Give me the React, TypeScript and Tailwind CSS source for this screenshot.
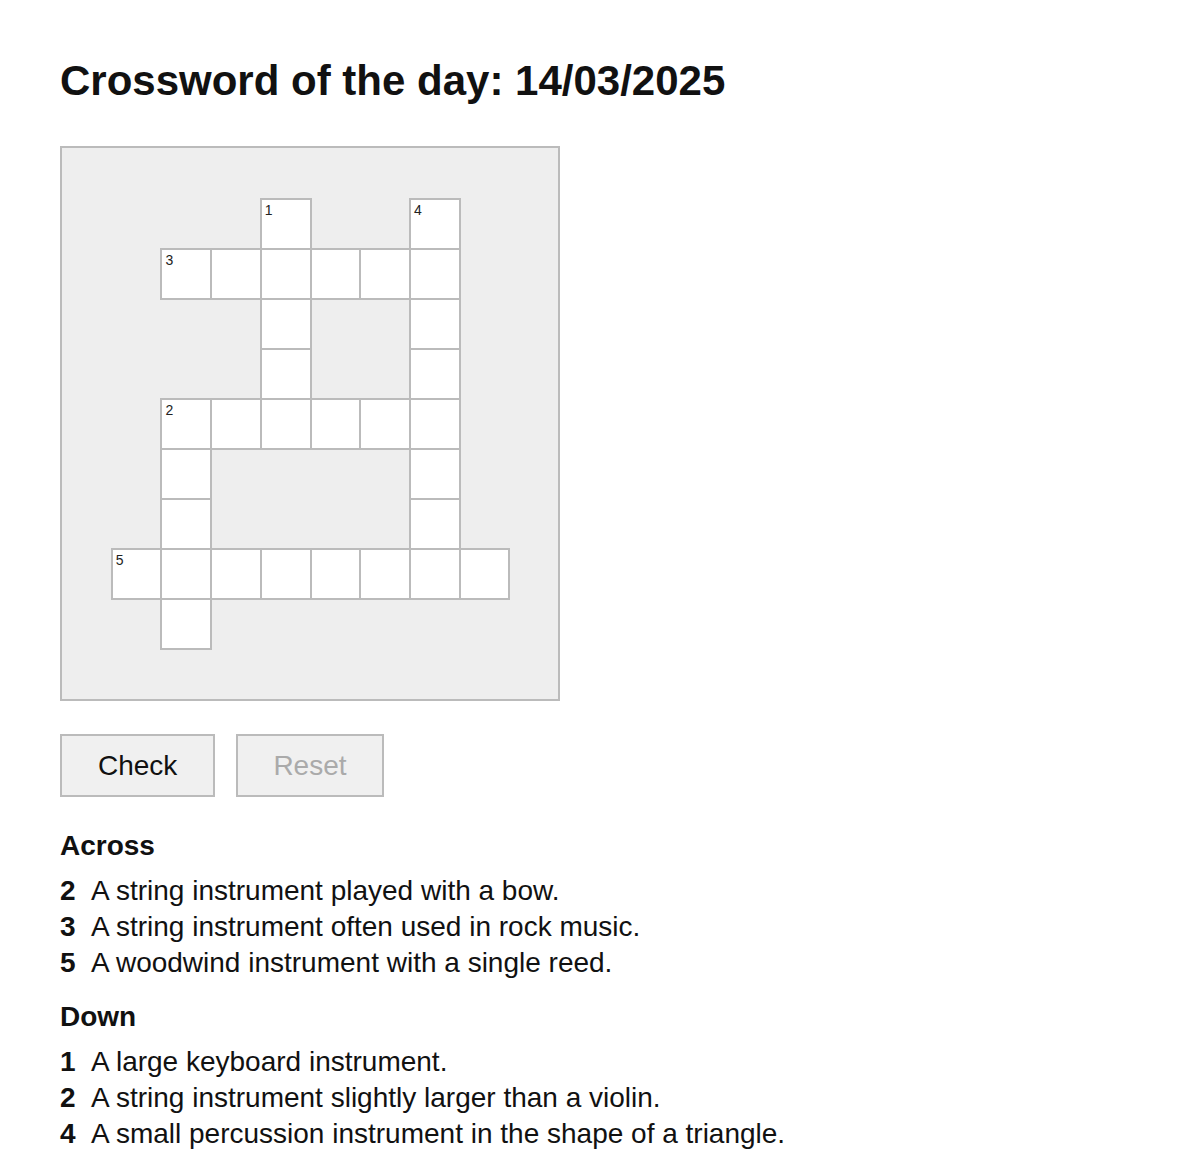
const FONT = "font-['Liberation_Sans',Arial,Helvetica,sans-serif]";

type Cell = { r: number; c: number; n?: number };

// rows 0..10, cols 0..9
const cells: Cell[] = [
  { r: 1, c: 4, n: 1 },
  { r: 1, c: 7, n: 4 },
  { r: 2, c: 2, n: 3 },
  { r: 2, c: 3 },
  { r: 2, c: 4 },
  { r: 2, c: 5 },
  { r: 2, c: 6 },
  { r: 2, c: 7 },
  { r: 3, c: 4 },
  { r: 3, c: 7 },
  { r: 4, c: 4 },
  { r: 4, c: 7 },
  { r: 5, c: 2, n: 2 },
  { r: 5, c: 3 },
  { r: 5, c: 4 },
  { r: 5, c: 5 },
  { r: 5, c: 6 },
  { r: 5, c: 7 },
  { r: 6, c: 2 },
  { r: 6, c: 7 },
  { r: 7, c: 2 },
  { r: 7, c: 7 },
  { r: 8, c: 1, n: 5 },
  { r: 8, c: 2 },
  { r: 8, c: 3 },
  { r: 8, c: 4 },
  { r: 8, c: 5 },
  { r: 8, c: 6 },
  { r: 8, c: 7 },
  { r: 8, c: 8 },
  { r: 9, c: 2 },
];

const across = [
  { n: 2, text: "A string instrument played with a bow." },
  { n: 3, text: "A string instrument often used in rock music." },
  { n: 5, text: "A woodwind instrument with a single reed." },
];

const down = [
  { n: 1, text: "A large keyboard instrument." },
  { n: 2, text: "A string instrument slightly larger than a violin." },
  { n: 4, text: "A small percussion instrument in the shape of a triangle." },
];

function ClueList({ title, clues }: { title: string; clues: { n: number; text: string }[] }) {
  return (
    <div>
      <h2 className="text-[28px] leading-[32px] font-bold">{title}</h2>
      <ul className="mt-[11px]">
        {clues.map((c) => (
          <li key={c.n} className="flex text-[28px] leading-[36px]">
            <span className="w-[31px] font-bold">{c.n}</span>
            <span>{c.text}</span>
          </li>
        ))}
      </ul>
    </div>
  );
}

export default function App() {
  return (
    <div className={`${FONT} bg-white text-[#111] min-h-[1170px] px-[60px] pt-[57px]`}>
      <h1 className="text-[42px] leading-[48px] font-bold">Crossword of the day: 14/03/2025</h1>

      <div className="mt-[41px] w-[500px] h-[555px] border-2 border-[#bbb] bg-[#eee]">
        <div className="grid grid-cols-[repeat(10,1fr)] grid-rows-[repeat(11,50px)] -ml-px">
          {cells.map((cell) => (
            <div
              key={`${cell.r}-${cell.c}`}
              className="relative bg-white border-2 border-[#bbb] -mr-[2px] -mb-[2px]"
              style={{ gridRow: cell.r + 1, gridColumn: cell.c + 1 }}
            >
              {cell.n && (
                <span className="absolute left-[3px] top-[2px] text-[14px] leading-[16px] text-[#222]">
                  {cell.n}
                </span>
              )}
            </div>
          ))}
        </div>
      </div>

      <div className="mt-[33px] flex gap-[21px]">
        <button className="h-[63px] px-[36px] border-2 border-[#bbb] bg-[#f0f0f0] text-[28px] text-[#111]">
          Check
        </button>
        <button disabled className="h-[63px] px-[35px] border-2 border-[#bbb] bg-[#f0f0f0] text-[28px] text-[#aaa]">
          Reset
        </button>
      </div>

      <div className="mt-[33px] flex flex-col gap-[20px]">
        <ClueList title="Across" clues={across} />
        <ClueList title="Down" clues={down} />
      </div>
    </div>
  );
}
